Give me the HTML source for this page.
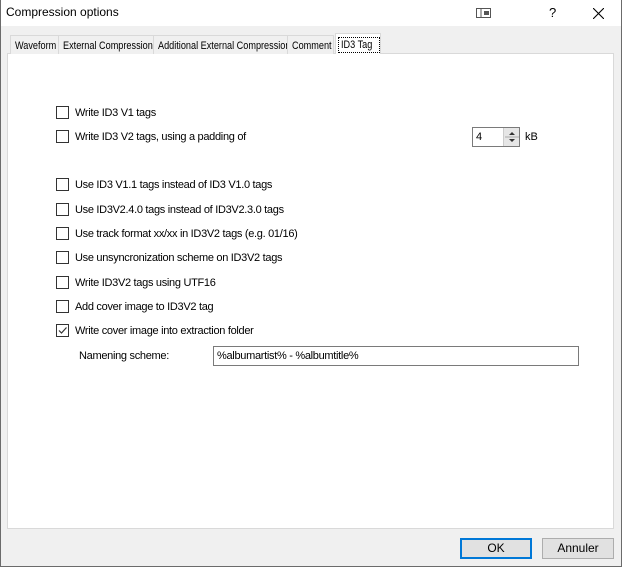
<!DOCTYPE html>
<html><head><style>
*{margin:0;padding:0;box-sizing:border-box}
body{width:622px;height:567px;background:#f0f0f0;font-family:"Liberation Sans",sans-serif;font-size:11px;color:#000;position:relative;overflow:hidden}
.win{position:absolute;left:0;top:0;width:622px;height:567px;border:1px solid #6b6b6b;border-top:none}
.title{position:absolute;left:1px;top:0;width:620px;height:26px;background:#fff}
.title span{position:absolute;left:5px;top:5px;font-size:12px}
.a{position:absolute;white-space:nowrap}
.tab{position:absolute;top:35px;height:19px;border:1px solid #d9d9d9;border-bottom:none;background:#f0f0f0;padding:4px 0 0 4px;font-size:11px;white-space:nowrap;overflow:hidden}
.tab i{font-style:normal;display:inline-block;transform:scaleX(0.83);transform-origin:left}
.panel{position:absolute;left:7px;top:53px;width:607px;height:476px;background:#fff;border:1px solid #d9d9d9}
.cb{position:absolute;left:56px;width:13px;height:13px;border:1px solid #333;background:#fff}
.lbl{position:absolute;left:75px;white-space:nowrap;letter-spacing:-0.3px;margin-top:1px}
.btn{position:absolute;top:538px;width:72px;height:21px;border:1px solid #adadad;background:#e1e1e1;text-align:center;line-height:19px;font-size:12px}
</style></head><body>
<div class="win"></div>
<div class="title"><span>Compression options</span>
<svg class="a" style="left:475px;top:8px" width="15" height="10"><rect x="0.5" y="0.5" width="14" height="9" fill="none" stroke="#555"/><rect x="8" y="3" width="5" height="4" fill="#555"/><line x1="5" y1="0" x2="5" y2="10" stroke="#555"/></svg>
<span style="left:548px;top:5px;font-size:13px">?</span>
<svg class="a" style="left:592px;top:8px" width="11" height="11"><path d="M0 0L11 11M11 0L0 11" stroke="#000" stroke-width="1.1"/></svg>
</div>
<div class="panel"></div>
<div class="tab" style="left:10px;width:49px"><i>Waveform</i></div>
<div class="tab" style="left:58px;width:96px"><i>External Compression</i></div>
<div class="tab" style="left:153px;width:135px"><i>Additional External Compression</i></div>
<div class="tab" style="left:287px;width:47px"><i>Comment</i></div>
<div class="tab" style="left:335px;top:33px;height:21px;width:46px;background:#fff;padding:3px 0 0 2px"><span style="border:1px dotted #000;padding:1px 2px;font-size:11px;display:inline-block;width:42px"><i>ID3 Tag</i></span></div>

<div class="cb" style="top:106px"></div><div class="lbl" style="top:106px">Write ID3 V1 tags</div>
<div class="cb" style="top:130px"></div><div class="lbl" style="top:130px">Write ID3 V2 tags, using a padding of</div>
<div class="a" style="left:472px;top:127px;width:48px;height:20px;border:1px solid #7a7a7a;background:#fff;padding:3px 0 0 3px">4</div>
<div class="a" style="left:503px;top:128px;width:16px;height:18px;background:#e6e6e6;border-left:1px solid #ccc"><svg width="16" height="18"><path d="M5 7L8 4L11 7Z M5 11L8 14L11 11Z" fill="#333"/><line x1="1" y1="9" x2="15" y2="9" stroke="#aaa"/></svg></div>
<div class="a" style="left:525px;top:131px">kB</div>
<div class="cb" style="top:178px"></div><div class="lbl" style="top:178px">Use ID3 V1.1 tags instead of ID3 V1.0 tags</div>
<div class="cb" style="top:203px"></div><div class="lbl" style="top:203px">Use ID3V2.4.0 tags instead of ID3V2.3.0 tags</div>
<div class="cb" style="top:227px"></div><div class="lbl" style="top:227px">Use track format xx/xx in ID3V2 tags (e.g. 01/16)</div>
<div class="cb" style="top:251px"></div><div class="lbl" style="top:251px">Use unsyncronization scheme on ID3V2 tags</div>
<div class="cb" style="top:276px"></div><div class="lbl" style="top:276px">Write ID3V2 tags using UTF16</div>
<div class="cb" style="top:300px"></div><div class="lbl" style="top:300px">Add cover image to ID3V2 tag</div>
<div class="cb" style="top:324px"><svg width="11" height="11" style="position:absolute;left:0;top:0"><path d="M2 5.5L4.5 8L9.5 2.5" stroke="#333" fill="none" stroke-width="1.2"/></svg></div><div class="lbl" style="top:324px">Write cover image into extraction folder</div>
<div class="a" style="left:79px;top:350px;letter-spacing:-0.3px">Namening scheme:</div>
<div class="a" style="left:213px;top:346px;width:366px;height:20px;border:1px solid #7a7a7a;background:#fff;padding:3px 0 0 3px;letter-spacing:-0.3px">%albumartist% - %albumtitle%</div>
<div class="btn" style="left:460px;border:2px solid #0078d7;line-height:17px">OK</div>
<div class="btn" style="left:542px">Annuler</div>
</body></html>
